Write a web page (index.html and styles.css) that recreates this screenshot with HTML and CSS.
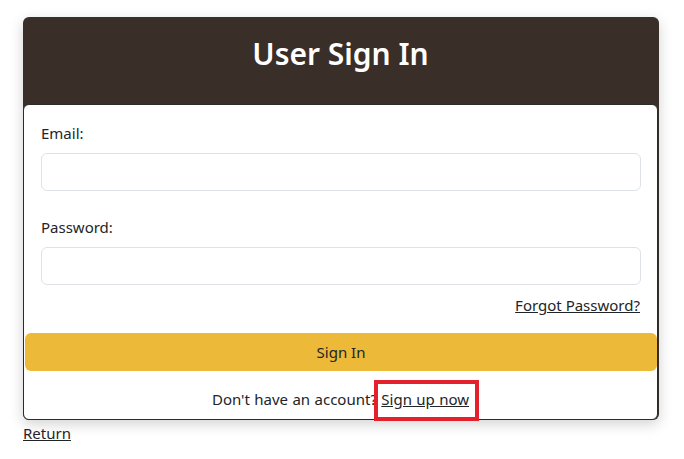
FILE: index.html
```html
<!DOCTYPE html>
<html lang="en">
<head>
<meta charset="utf-8">
<title>User Sign In</title>
<link rel="stylesheet" href="styles.css">
</head>
<body>
<div class="wrap">
  <div class="card">
    <div class="card-header">
      <h1 class="title">User Sign In</h1>
    </div>
    <div class="card-body">
      <form class="form">
        <div class="field">
          <label class="label" for="email">Email:</label>
          <input class="input" id="email" type="email">
        </div>
        <div class="field">
          <label class="label" for="password">Password:</label>
          <input class="input" id="password" type="password">
        </div>
        <div class="forgot-row">
          <a class="link" href="#">Forgot Password?</a>
        </div>
        <button class="btn" type="button">Sign In</button>
        <p class="signup">Don't have an account? <a class="link highlight" href="#">Sign up now</a></p>
      </form>
    </div>
  </div>
  <a class="link return" href="#">Return</a>
</div>
</body>
</html>
```

FILE: styles.css
```css
* { box-sizing: border-box; }
html, body { margin: 0; padding: 0; background: #fff; }
body {
  font-family: "Noto Sans", "Open Sans", sans-serif;
  font-size: 15px;
  color: #212529;
}
.wrap {
  width: 636px;
  margin: 17px 0 0 23px;
}
.card {
  background: #3a2e29;
  border-radius: 6px;
  box-shadow: 0 4px 14px rgba(0, 0, 0, 0.18);
  padding: 0 1px 0 0;
}
.card-header {
  padding: 17px 0 30px;
  text-align: center;
}
.title {
  margin: 0;
  font-size: 30px;
  line-height: 40px;
  font-weight: 600;
  color: #fff;
}
.card-body {
  background: #fff;
  border: 1px solid #2b2b2b;
  border-radius: 6px;
}
.form {
  display: flex;
  flex-direction: column;
}
.field {
  display: flex;
  flex-direction: column;
  gap: 8px;
  padding: 16px 16px 8px 17px;
}
.field + .field { padding-top: 16px; }
.label {
  line-height: 24px;
}
.input {
  height: 38px;
  border: 1px solid #dee2e6;
  border-radius: 6px;
  font: inherit;
  padding: 6px 12px;
}
.forgot-row {
  display: flex;
  justify-content: flex-end;
  padding: 0 17px 0 16px;
  line-height: 24px;
}
.link {
  color: #212529;
  text-decoration: underline;
}
.btn {
  margin: 16px 0 0 1px;
  height: 38px;
  border: none;
  border-radius: 6px;
  background: #ecb939;
  color: #212529;
  font: inherit;
}
.signup {
  margin: 0;
  padding: 16px 0 8px;
  text-align: center;
  line-height: 24px;
  word-spacing: 0.5px;
}
.highlight {
  position: relative;
}
.highlight::after {
  content: "";
  position: absolute;
  left: -7px;
  right: -10px;
  top: -9px;
  bottom: -12px;
  border: 4px solid #e3202b;
}
.return {
  display: inline-block;
  line-height: 24px;
  margin-top: 1px;
}
```
